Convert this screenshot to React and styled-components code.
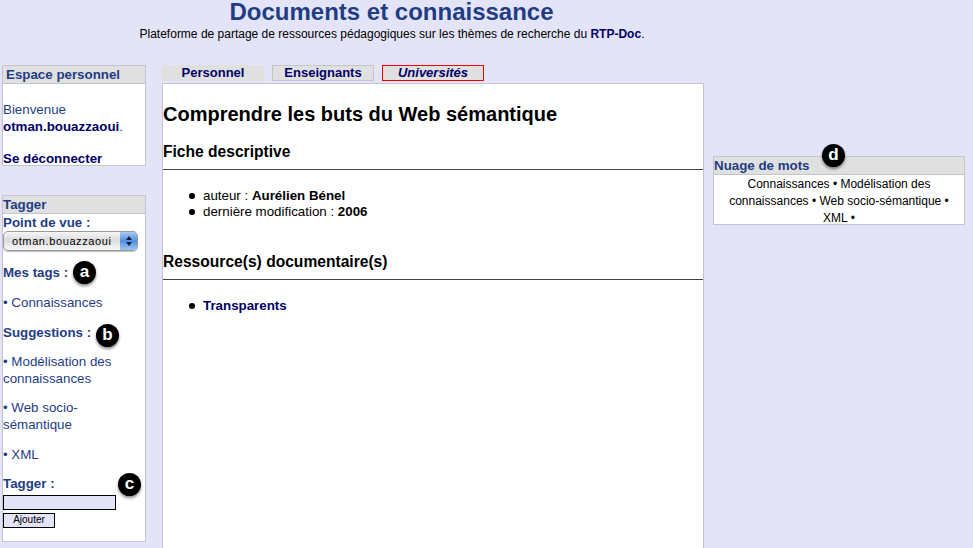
import React from "react";
import styled, { createGlobalStyle } from "styled-components";

const GlobalStyle = createGlobalStyle`
  html, body {
    margin: 0;
    padding: 0;
    height: 548px;
    overflow: hidden;
    background: #e4e4f8;
    font-family: "Liberation Sans", Arial, sans-serif;
  }
`;

const Page = styled.div`
  width: 973px;
  height: 548px;
  overflow: hidden;
`;

const Header = styled.header`
  height: 65px;
  text-align: center;
  width: 783px;
`;

const Title = styled.h1`
  margin: 0;
  font-size: 24px;
  line-height: 24px;
  font-weight: bold;
  color: #1f3d84;
`;

const Subtitle = styled.p`
  margin: 3px 0 0;
  padding-left: 1px;
  font-size: 12px;
  line-height: 14px;
  color: #000;

  b {
    color: #000066;
  }
`;

const Columns = styled.div`
  display: flex;
  align-items: flex-start;
  padding-left: 2px;
`;

const Left = styled.aside`
  display: flex;
  flex-direction: column;
  gap: 29px;
  width: 144px;
  margin-right: 16px;
`;

const Center = styled.div`
  width: 542px;
  margin-right: 9px;
`;

const Right = styled.aside`
  width: 252px;
  padding-top: 91px;
`;

const Box = styled.section`
  position: relative;
  background: #fff;
  border: 1px solid #c4c4cc;
  box-sizing: border-box;
  color: #1f3d84;
  font-size: 13.33px;
  height: ${(p) => p.$height}px;
`;

const BoxTitle = styled.h3`
  margin: 0;
  background: #e0e0e0;
  border-bottom: 1px solid #c4c4cc;
  height: 17px;
  padding-left: ${(p) => p.$indent || 0}px;
  font-size: 13.33px;
  line-height: 17px;
  font-weight: bold;
  color: #1f3d84;
`;

const BoxText = styled.p`
  margin: ${(p) => p.$top || 0}px 0 0;
  line-height: 17px;
  font-size: 13.33px;
`;

const Strong = styled.b`
  color: #000066;
`;

const Label = styled.div`
  position: relative;
  margin-top: ${(p) => p.$top || 0}px;
  font-size: 13.33px;
  line-height: 17px;
  font-weight: bold;
`;

const TagLink = styled.div`
  margin-top: ${(p) => p.$top || 0}px;
  font-size: 13.33px;
  line-height: 17.5px;
`;

const FakeSelect = styled.div`
  display: flex;
  width: 135px;
  height: 20px;
  box-sizing: border-box;
  border: 1px solid #9a9a9a;
  border-radius: 5px;
  overflow: hidden;
  background: linear-gradient(#f6f6f6, #dcdcdc 45%, #f8f8f8);
  box-shadow: 0 1px 1px rgba(0, 0, 0, 0.25);
  font-size: 11px;
  line-height: 18px;
  color: #000;
`;

const SelectValue = styled.span`
  flex: 1;
  padding-left: 8px;
  letter-spacing: 0.6px;
`;

const SelectArrows = styled.span`
  width: 17px;
  display: flex;
  align-items: center;
  justify-content: center;
  background: linear-gradient(#a9c9f2, #4f8fe0 50%, #9cc4f4);
`;

const TagInput = styled.div`
  width: 113px;
  height: 15px;
  box-sizing: border-box;
  margin-top: 3px;
  background: #e4e4f8;
  border: 1px solid #000;
`;

const AddButton = styled.div`
  width: 52px;
  height: 15px;
  box-sizing: border-box;
  margin-top: 3px;
  background: #e4e4f8;
  border: 1px solid #000;
  font-size: 10px;
  line-height: 12px;
  text-align: center;
  color: #000;
`;

const Badge = styled.span`
  position: absolute;
  left: ${(p) => p.$left}px;
  top: ${(p) => p.$top}px;
  width: 23px;
  height: 23px;
  border-radius: 50%;
  background: #000;
  box-shadow: 0 2px 3px rgba(0, 0, 0, 0.45);
  color: #fff;
  font-size: 17px;
  font-weight: bold;
  line-height: 21px;
  text-align: center;
`;

const Tabs = styled.nav`
  display: flex;
  gap: 8px;
  height: 18px;
`;

const Tab = styled.div`
  width: 102px;
  height: 16px;
  box-sizing: border-box;
  background: #e0e0e0;
  border: 1px solid ${(p) => p.$border};
  font-size: 13px;
  line-height: 14px;
  font-weight: bold;
  font-style: ${(p) => (p.$italic ? "italic" : "normal")};
  text-align: center;
  color: #000066;
`;

const Content = styled.main`
  background: #fff;
  border: 1px solid #c4c4cc;
  box-sizing: border-box;
  height: 500px;
  color: #000;
`;

const DocTitle = styled.h1`
  margin: 19px 0 0;
  font-size: 20px;
  line-height: 22px;
  font-weight: bold;
`;

const SectionTitle = styled.h2`
  margin: ${(p) => p.$top}px 0 0;
  padding-bottom: 8px;
  border-bottom: 1px solid #444;
  font-size: 15.6px;
  line-height: 18px;
  font-weight: bold;
`;

const List = styled.ul`
  margin: 18px 0 0;
  padding-left: 40px;
  list-style: none;
  font-size: 13.33px;
  line-height: 16px;
`;

const Item = styled.li`
  position: relative;

  &::before {
    content: "";
    position: absolute;
    left: -14px;
    top: 5px;
    width: 6px;
    height: 6px;
    border-radius: 50%;
    background: #000;
  }
`;

const Cloud = styled.div`
  padding: 1px 8px 0;
  text-align: center;
  font-size: 12px;
  line-height: 17px;
  color: #000;
`;

export default function App() {
  return (
    <Page>
      <GlobalStyle />
      <Header>
        <Title>Documents et connaissance</Title>
        <Subtitle>
          Plateforme de partage de ressources pédagogiques sur les thèmes de
          recherche du <b>RTP-Doc</b>.
        </Subtitle>
      </Header>
      <Columns>
        <Left>
          <Box $height={101}>
            <BoxTitle $indent={3}>Espace personnel</BoxTitle>
            <BoxText $top={17}>
              Bienvenue
              <br />
              <Strong>otman.bouazzaoui</Strong>.
            </BoxText>
            <BoxText $top={15}>
              <Strong>Se déconnecter</Strong>
            </BoxText>
          </Box>
          <Box $height={347}>
            <BoxTitle>Tagger</BoxTitle>
            <Label>Point de vue :</Label>
            <FakeSelect>
              <SelectValue>otman.bouazzaoui</SelectValue>
              <SelectArrows>
                <svg width="8" height="12" viewBox="0 0 8 12">
                  <path d="M4 1 L7 5 H1 Z M4 11 L1 7 H7 Z" fill="#10203c" />
                </svg>
              </SelectArrows>
            </FakeSelect>
            <Label $top={13}>
              Mes tags :<Badge $left={70} $top={-3}>a</Badge>
            </Label>
            <TagLink $top={13}>• Connaissances</TagLink>
            <Label $top={12}>
              Suggestions :<Badge $left={93} $top={0}>b</Badge>
            </Label>
            <TagLink $top={12}>• Modélisation des connaissances</TagLink>
            <TagLink $top={11}>• Web socio-sémantique</TagLink>
            <TagLink $top={12}>• XML</TagLink>
            <Label $top={12}>
              Tagger :<Badge $left={115} $top={-2}>c</Badge>
            </Label>
            <TagInput />
            <AddButton>Ajouter</AddButton>
          </Box>
        </Left>
        <Center>
          <Tabs>
            <Tab $border="#e0e0e0">Personnel</Tab>
            <Tab $border="#c4c4cc">Enseignants</Tab>
            <Tab $border="#f00000" $italic>
              Universités
            </Tab>
          </Tabs>
          <Content>
            <DocTitle>Comprendre les buts du Web sémantique</DocTitle>
            <SectionTitle $top={18}>Fiche descriptive</SectionTitle>
            <List>
              <Item>
                auteur : <b>Aurélien Bénel</b>
              </Item>
              <Item>
                dernière modification : <b>2006</b>
              </Item>
            </List>
            <SectionTitle $top={33}>Ressource(s) documentaire(s)</SectionTitle>
            <List>
              <Item>
                <Strong>Transparents</Strong>
              </Item>
            </List>
          </Content>
        </Center>
        <Right>
          <Box $height={69}>
            <BoxTitle>Nuage de mots</BoxTitle>
            <Badge $left={108} $top={-13}>d</Badge>
            <Cloud>
              Connaissances • Modélisation des connaissances • Web
              socio-sémantique • XML •
            </Cloud>
          </Box>
        </Right>
      </Columns>
    </Page>
  );
}
